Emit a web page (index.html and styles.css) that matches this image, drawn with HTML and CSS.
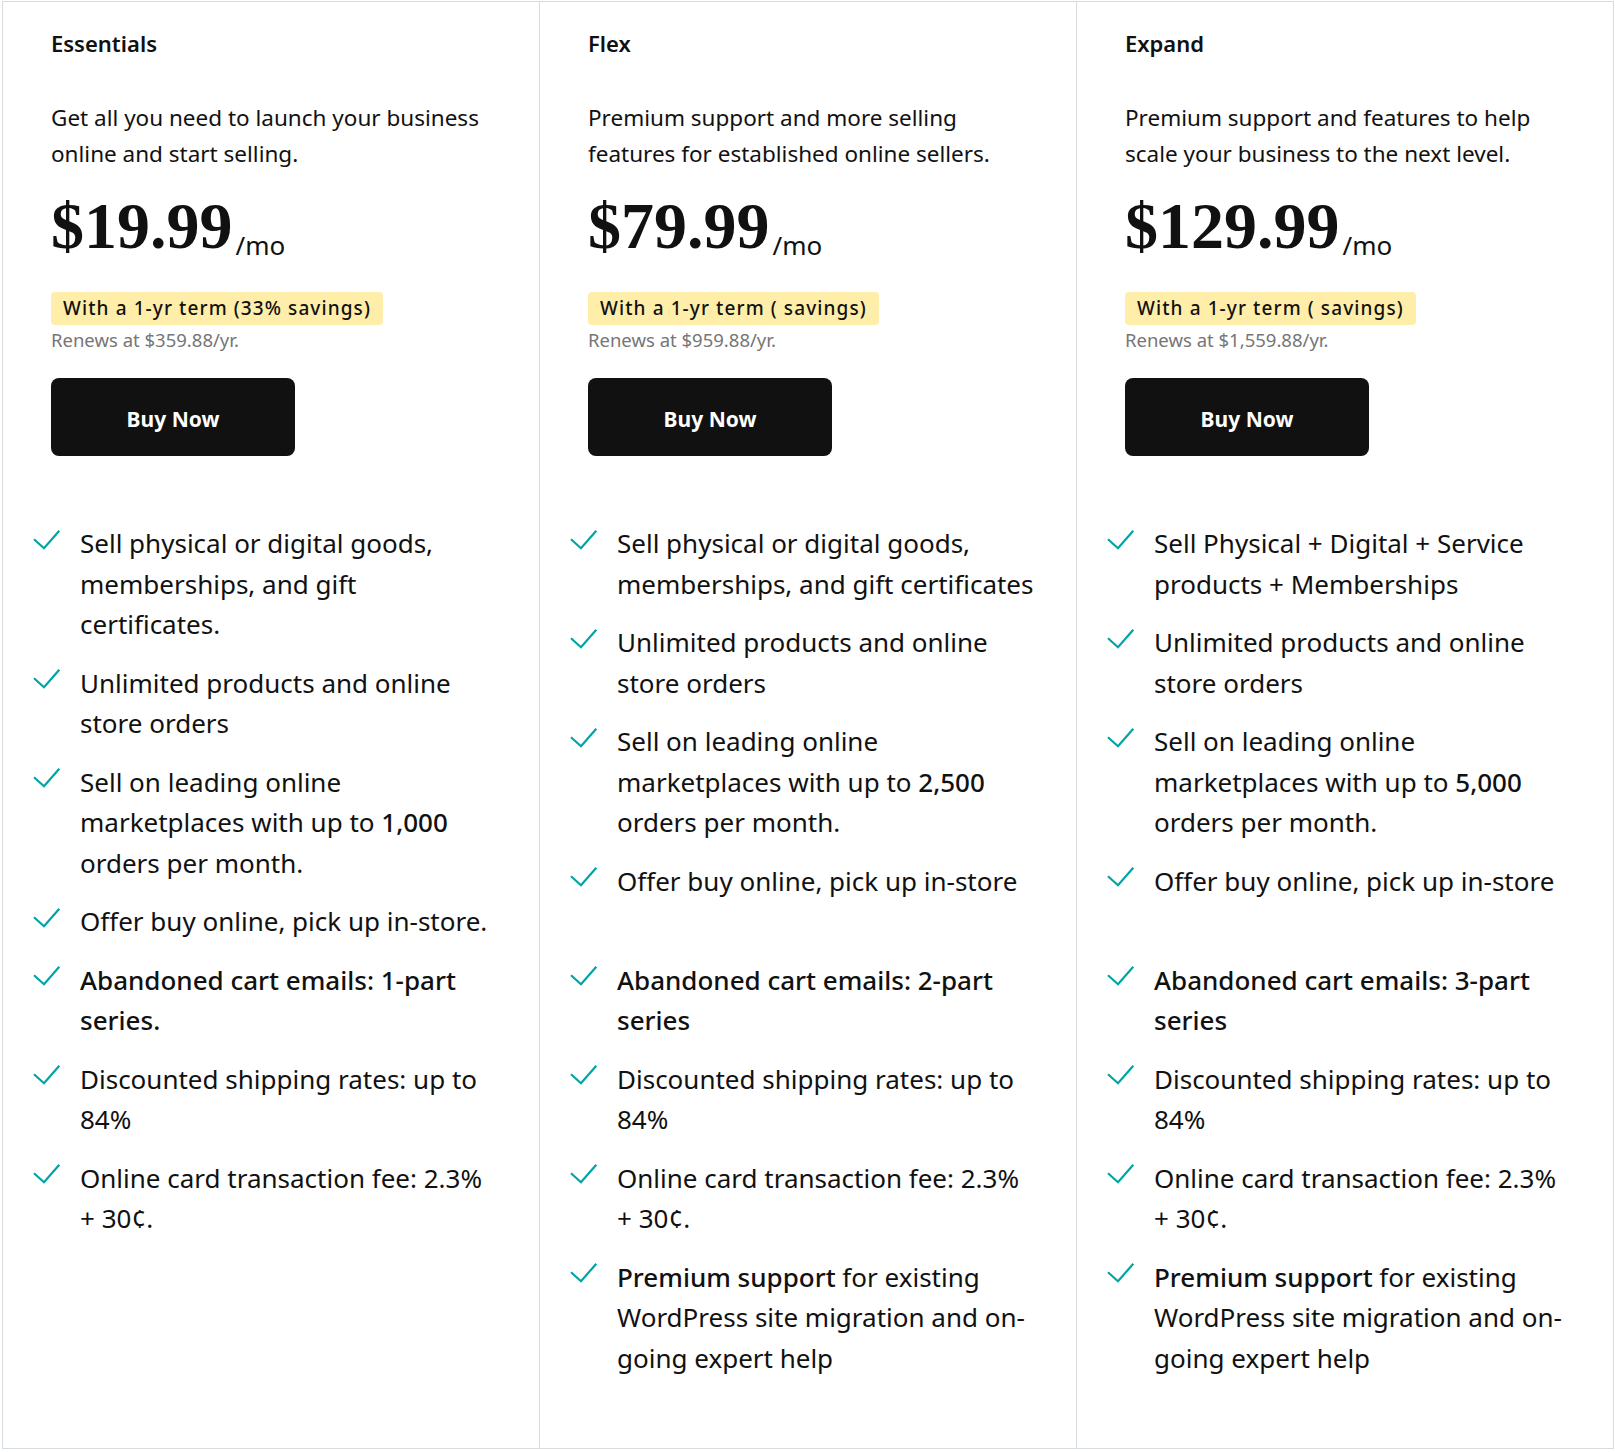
FILE: index.html
```html
<!DOCTYPE html>
<html lang="en">
<head>
<meta charset="utf-8">
<title>Plans</title>
<link rel="stylesheet" href="styles.css">
</head>
<body>
<div class="plans">
  <section class="plan">
    <h2 class="plan-name">Essentials</h2>
    <p class="plan-desc">Get all you need to launch your business online and start selling.</p>
    <div class="price"><span class="amount">$19.99</span><span class="per">/mo</span></div>
    <div class="term">With a 1-yr term (33% savings)</div>
    <p class="renew">Renews at $359.88/yr.</p>
    <a class="buy" href="#">Buy Now</a>
    <ul class="features">
      <li><svg class="check" viewBox="0 0 28 22"><path d="M1 10.3 L11 19.3 L26.3 1.7"/></svg><span>Sell physical or digital goods, memberships, and gift certificates.</span></li>
      <li><svg class="check" viewBox="0 0 28 22"><path d="M1 10.3 L11 19.3 L26.3 1.7"/></svg><span>Unlimited products and online store orders</span></li>
      <li><svg class="check" viewBox="0 0 28 22"><path d="M1 10.3 L11 19.3 L26.3 1.7"/></svg><span>Sell on leading online marketplaces with up to <b>1,000</b> orders per month.</span></li>
      <li><svg class="check" viewBox="0 0 28 22"><path d="M1 10.3 L11 19.3 L26.3 1.7"/></svg><span>Offer buy online, pick up in-store.</span></li>
      <li><svg class="check" viewBox="0 0 28 22"><path d="M1 10.3 L11 19.3 L26.3 1.7"/></svg><span class="strong">Abandoned cart emails: 1-part series.</span></li>
      <li><svg class="check" viewBox="0 0 28 22"><path d="M1 10.3 L11 19.3 L26.3 1.7"/></svg><span>Discounted shipping rates: up to 84%</span></li>
      <li><svg class="check" viewBox="0 0 28 22"><path d="M1 10.3 L11 19.3 L26.3 1.7"/></svg><span>Online card transaction fee: 2.3% +&nbsp;30¢.</span></li>
    </ul>
  </section>
  <section class="plan">
    <h2 class="plan-name">Flex</h2>
    <p class="plan-desc">Premium support and more selling features for established online sellers.</p>
    <div class="price"><span class="amount">$79.99</span><span class="per">/mo</span></div>
    <div class="term">With a 1-yr term ( savings)</div>
    <p class="renew">Renews at $959.88/yr.</p>
    <a class="buy" href="#">Buy Now</a>
    <ul class="features">
      <li><svg class="check" viewBox="0 0 28 22"><path d="M1 10.3 L11 19.3 L26.3 1.7"/></svg><span>Sell physical or digital goods, memberships, and gift certificates</span></li>
      <li><svg class="check" viewBox="0 0 28 22"><path d="M1 10.3 L11 19.3 L26.3 1.7"/></svg><span>Unlimited products and online store orders</span></li>
      <li><svg class="check" viewBox="0 0 28 22"><path d="M1 10.3 L11 19.3 L26.3 1.7"/></svg><span>Sell on leading online marketplaces with up to <b>2,500</b> orders per month.</span></li>
      <li class="tall"><svg class="check" viewBox="0 0 28 22"><path d="M1 10.3 L11 19.3 L26.3 1.7"/></svg><span>Offer buy online, pick up in-store</span></li>
      <li><svg class="check" viewBox="0 0 28 22"><path d="M1 10.3 L11 19.3 L26.3 1.7"/></svg><span class="strong">Abandoned cart emails: 2-part series</span></li>
      <li><svg class="check" viewBox="0 0 28 22"><path d="M1 10.3 L11 19.3 L26.3 1.7"/></svg><span>Discounted shipping rates: up to 84%</span></li>
      <li><svg class="check" viewBox="0 0 28 22"><path d="M1 10.3 L11 19.3 L26.3 1.7"/></svg><span>Online card transaction fee: 2.3% +&nbsp;30¢.</span></li>
      <li><svg class="check" viewBox="0 0 28 22"><path d="M1 10.3 L11 19.3 L26.3 1.7"/></svg><span><b class="lead">Premium support</b> for existing WordPress site migration and on-going expert help</span></li>
    </ul>
  </section>
  <section class="plan">
    <h2 class="plan-name">Expand</h2>
    <p class="plan-desc">Premium support and features to help scale your business to the next level.</p>
    <div class="price"><span class="amount">$129.99</span><span class="per">/mo</span></div>
    <div class="term">With a 1-yr term ( savings)</div>
    <p class="renew">Renews at $1,559.88/yr.</p>
    <a class="buy" href="#">Buy Now</a>
    <ul class="features">
      <li><svg class="check" viewBox="0 0 28 22"><path d="M1 10.3 L11 19.3 L26.3 1.7"/></svg><span>Sell Physical + Digital + Service products + Memberships</span></li>
      <li><svg class="check" viewBox="0 0 28 22"><path d="M1 10.3 L11 19.3 L26.3 1.7"/></svg><span>Unlimited products and online store orders</span></li>
      <li><svg class="check" viewBox="0 0 28 22"><path d="M1 10.3 L11 19.3 L26.3 1.7"/></svg><span>Sell on leading online marketplaces with up to <b>5,000</b> orders per month.</span></li>
      <li class="tall"><svg class="check" viewBox="0 0 28 22"><path d="M1 10.3 L11 19.3 L26.3 1.7"/></svg><span>Offer buy online, pick up in-store</span></li>
      <li><svg class="check" viewBox="0 0 28 22"><path d="M1 10.3 L11 19.3 L26.3 1.7"/></svg><span class="strong">Abandoned cart emails: 3-part series</span></li>
      <li><svg class="check" viewBox="0 0 28 22"><path d="M1 10.3 L11 19.3 L26.3 1.7"/></svg><span>Discounted shipping rates: up to 84%</span></li>
      <li><svg class="check" viewBox="0 0 28 22"><path d="M1 10.3 L11 19.3 L26.3 1.7"/></svg><span>Online card transaction fee: 2.3% +&nbsp;30¢.</span></li>
      <li><svg class="check" viewBox="0 0 28 22"><path d="M1 10.3 L11 19.3 L26.3 1.7"/></svg><span><b class="lead">Premium support</b> for existing WordPress site migration and on-going expert help</span></li>
    </ul>
  </section>
</div>
</body>
</html>
```
FILE: styles.css
```css
* { box-sizing: border-box; }

body {
  margin: 0;
  background: #fff;
  color: #111;
  font-family: "Noto Sans", "Open Sans", sans-serif;
}

.plans {
  display: grid;
  grid-template-columns: 537px 537px 538px;
  width: 1612px;
  margin: 1px 0 0 2px;
  border-top: 1px solid #d6dce0;
  border-bottom: 1px solid #d6dce0;
}

.plan {
  display: flex;
  flex-direction: column;
  align-items: flex-start;
  padding: 26px 38px 70px 48px;
  border-left: 1px solid #d6dce0;
}

.plan:last-child {
  border-right: 1px solid #d6dce0;
}

.plan-name {
  margin: 0;
  font-size: 22px;
  line-height: 30px;
  font-weight: 600;
  color: #111;
}

.plan-desc {
  margin: 42px 0 0;
  font-size: 22.5px;
  line-height: 36px;
  font-weight: 400;
  color: #111;
}

.price {
  margin-top: 21px;
  font-family: "Liberation Serif", "Times New Roman", serif;
  font-size: 66px;
  line-height: 66px;
  white-space: nowrap;
}

.amount {
  font-weight: 700;
  color: #111;
}

.per {
  margin-left: 3px;
  font-family: "Noto Sans", sans-serif;
  font-size: 26px;
  line-height: 26px;
  font-weight: 400;
  vertical-align: -7px;
}

.term {
  margin-top: 33px;
  padding: 4px 12px;
  background: #ffeea9;
  border-radius: 4px;
  font-size: 19px;
  line-height: 25px;
  font-weight: 500;
  letter-spacing: 1.1px;
  color: #111;
  white-space: nowrap;
}

.renew {
  margin: 3px 0 0;
  font-size: 18.5px;
  line-height: 24px;
  color: #767676;
}

.buy {
  margin-top: 26px;
  display: flex;
  align-items: center;
  justify-content: center;
  width: 244px;
  height: 78px;
  padding-top: 3px;
  background: #111;
  color: #fff;
  border-radius: 8px;
  font-size: 21px;
  font-weight: 700;
  text-decoration: none;
}

.features {
  align-self: stretch;
  list-style: none;
  margin: 67px 0 0 -18px;
  padding: 0;
  display: flex;
  flex-direction: column;
  gap: 18px;
}

.features li {
  display: grid;
  grid-template-columns: 47px 1fr;
  font-size: 26px;
  line-height: 40.5px;
  color: #111;
}

.features li.tall {
  min-height: 81px;
}

.check {
  width: 28px;
  height: 22px;
  margin-top: 5.5px;
  fill: none;
  stroke: #00a4a6;
  stroke-width: 2.2;
}

.features b,
.features .strong {
  font-weight: 500;
}
```
